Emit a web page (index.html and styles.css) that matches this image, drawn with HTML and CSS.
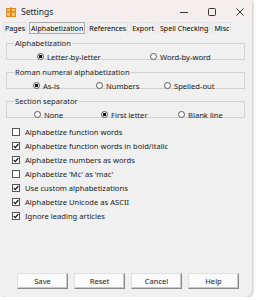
FILE: index.html
```html
<!doctype html>
<html>
  <head>
    <meta charset="UTF-8" />
    <title>Settings</title>
    <link rel="stylesheet" href="styles.css">
  </head>
  <body>
    <div class="window">
      <div class="titlebar">
        <svg class="appicon" width="10" height="10" viewBox="0 0 10 10">
          <rect x="0.5" y="1.5" width="9" height="8" fill="#f7c46a" stroke="#e08a1e"/>
          <rect x="4" y="0.5" width="2" height="9" fill="#e08a1e"/>
          <rect x="0.5" y="4" width="9" height="1.5" fill="#e08a1e"/>
        </svg>
        <span class="title">Settings</span>
        <span class="controls">
          <svg width="10" height="10" viewBox="0 0 10 10"><path d="M1 5.5h8" stroke="#333" stroke-width="1"/></svg>
          <svg width="10" height="10" viewBox="0 0 10 10"><rect x="1.5" y="1.5" width="7" height="7" rx="1" fill="none" stroke="#333"/></svg>
          <svg width="10" height="10" viewBox="0 0 10 10"><path d="M1.5 1.5l7 7M8.5 1.5l-7 7" stroke="#333"/></svg>
        </span>
      </div>

      <div class="tabs">
        <span class="tab">Pages</span>
        <span class="tab selected">Alphabetization</span>
        <span class="tab">References</span>
        <span class="tab">Export</span>
        <span class="tab">Spell Checking</span>
        <span class="tab">Misc</span>
      </div>

      <div class="panel">
        <fieldset class="group">
          <legend>Alphabetization</legend>
          <div class="options two">
            <label class="radio on">Letter-by-letter</label>
            <label class="radio">Word-by-word</label>
          </div>
        </fieldset>

        <fieldset class="group">
          <legend>Roman numeral alphabetization</legend>
          <div class="options roman">
            <label class="radio on">As-is</label>
            <label class="radio">Numbers</label>
            <label class="radio">Spelled-out</label>
          </div>
        </fieldset>

        <fieldset class="group">
          <legend>Section separator</legend>
          <div class="options sep">
            <label class="radio">None</label>
            <label class="radio on">First letter</label>
            <label class="radio">Blank line</label>
          </div>
        </fieldset>

        <div class="checks">
          <label class="check">Alphabetize function words</label>
          <label class="check on">Alphabetize function words in bold/italic</label>
          <label class="check on">Alphabetize numbers as words</label>
          <label class="check">Alphabetize 'Mc' as 'mac'</label>
          <label class="check on">Use custom alphabetizations</label>
          <label class="check on">Alphabetize Unicode as ASCII</label>
          <label class="check on">Ignore leading articles</label>
        </div>
      </div>

      <div class="buttons">
        <button>Save</button>
        <button>Reset</button>
        <button>Cancel</button>
        <button>Help</button>
      </div>
    </div>
  </body>
</html>
```

FILE: styles.css
```css
body {
  margin: 0;
  background: #ffffff;
  font-family: "Noto Sans", sans-serif;
  font-size: 7.6px;
  color: #1a1a1a;
}
.window {
  width: 252px;
  height: 297px;
  background: #f0f0f0;
  border-radius: 0 0 7px 7px;
  box-shadow: 1px 1px 3px rgba(0, 0, 0, 0.25);
  display: flex;
  flex-direction: column;
  overflow: hidden;
}
.titlebar {
  height: 22px;
  background: #f4eeee;
  display: flex;
  align-items: center;
  padding: 1px 0 0 6px;
  box-sizing: border-box;
}
.appicon {
  margin-right: 5px;
}
.title {
  font-size: 8.5px;
  color: #222;
}
.controls {
  margin-left: auto;
  display: flex;
  gap: 18px;
  padding-right: 7px;
}
.tabs {
  display: flex;
  height: 12px;
  padding-left: 3px;
  gap: 2px;
  white-space: nowrap;
}
.tab {
  border: 1px solid #e2e2e2;
  border-bottom: none;
  padding: 0 1px;
  line-height: 11px;
  font-size: 7.1px;
  color: #000;
}
.tab.selected {
  border-color: #a8a8a8;
  border-bottom: 1px solid #a8a8a8;
}
.panel {
  padding: 5px 7px 0 6px;
}
.group {
  margin: 0 0 8px;
  padding: 0;
  border: 1px solid #d2d2d2;
  height: 21px;
  box-sizing: border-box;
}
.group legend {
  margin-left: 7px;
  padding: 0 1px;
  line-height: 9px;
}
.options {
  display: flex;
  align-items: center;
  height: 17px;
}
.radio {
  display: flex;
  align-items: center;
  gap: 3px;
  flex: none;
}
.radio::before {
  content: "";
  width: 5px;
  height: 5px;
  border: 1px solid #555;
  border-radius: 50%;
  background: #fff;
  box-sizing: content-box;
}
.radio.on::before {
  background: radial-gradient(circle, #111 0 1.6px, #fff 2px);
}
.two { padding-left: 30px; }
.two .radio:first-child { width: 113px; }
.roman { padding-left: 26px; }
.roman .radio:nth-child(1) { width: 63px; }
.roman .radio:nth-child(2) { width: 68px; }
.sep { padding-left: 27px; }
.sep .radio:nth-child(1) { width: 67px; }
.sep .radio:nth-child(2) { width: 77px; }
.checks {
  display: flex;
  flex-direction: column;
  padding: 1px 0 0 6px;
  gap: 4px;
}
.check {
  display: flex;
  align-items: center;
  gap: 5px;
  height: 10px;
}
.check::before {
  content: "";
  width: 6px;
  height: 6px;
  border: 1px solid #555;
  background: #fff;
}
.check.on::before {
  background: #fff url("data:image/svg+xml,%3Csvg xmlns='http://www.w3.org/2000/svg' viewBox='0 0 6 6'%3E%3Cpath d='M0.8 3l1.5 1.6 3-3.6' fill='none' stroke='%23111' stroke-width='1.2'/%3E%3C/svg%3E") center / 6px 6px no-repeat;
}
.buttons {
  margin-top: auto;
  display: flex;
  gap: 6px;
  padding: 0 0 8px 17px;
}
button {
  width: 51px;
  height: 16px;
  padding: 0;
  font: inherit;
  color: #1a1a1a;
  background: #fbfbfb;
  border: 1px solid #e0e0e0;
  border-right-color: #8a8a8a;
  border-bottom-color: #8a8a8a;
  box-shadow: inset -1px -1px 0 #c8c8c8;
}
```
